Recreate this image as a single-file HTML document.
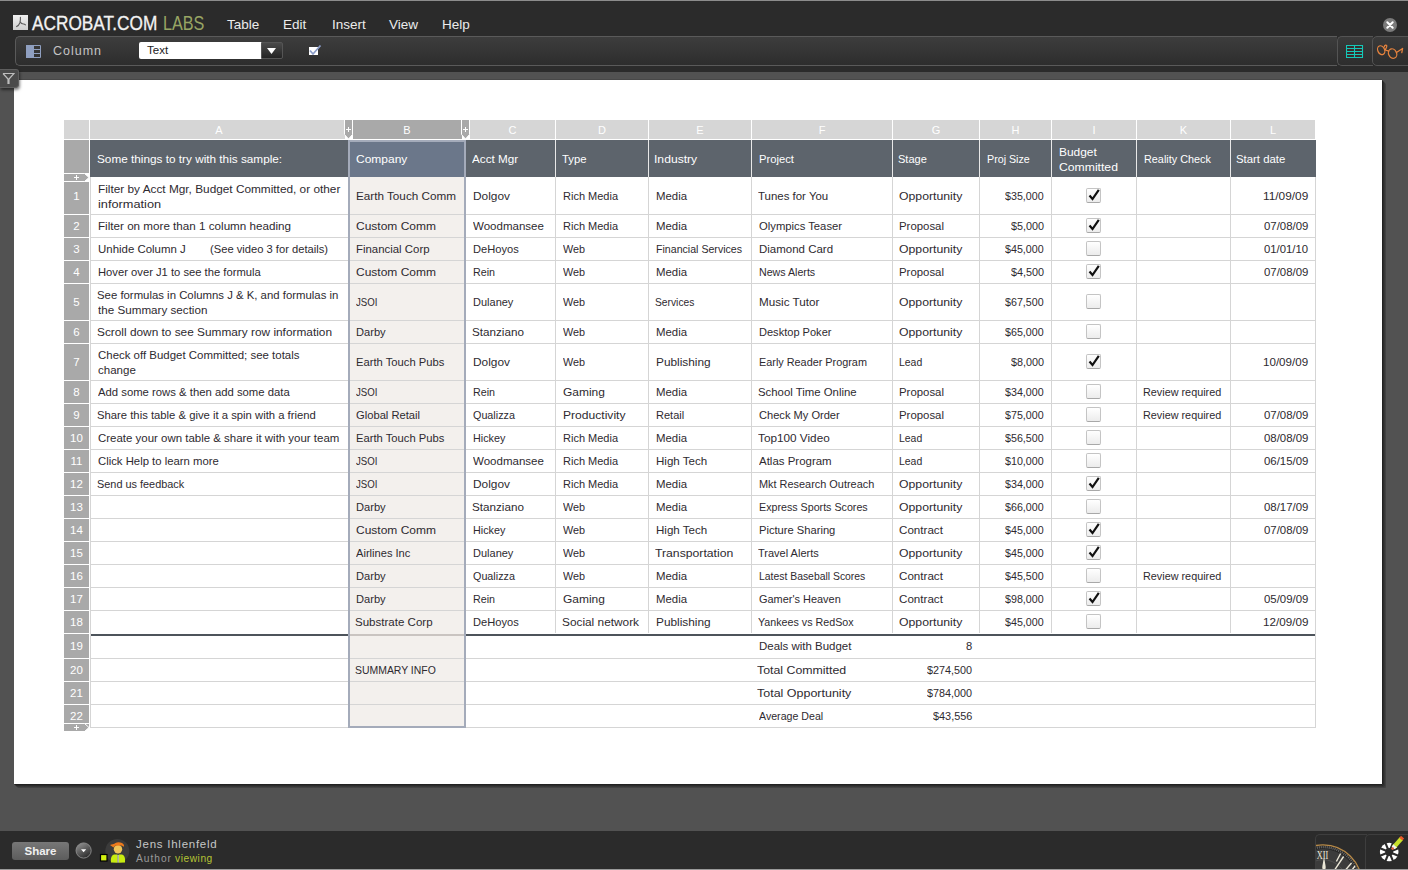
<!DOCTYPE html><html><head><meta charset="utf-8"><style>
*{margin:0;padding:0;box-sizing:border-box}
html,body{width:1408px;height:870px;overflow:hidden;background:#525252;font-family:"Liberation Sans", sans-serif}
.ab{position:absolute}
.t{position:absolute;font-size:11.8px;color:#2e2a30;white-space:nowrap;line-height:15px}
.r{text-align:right}
.cb{position:absolute;width:15px;height:15px;border:1px solid #c4c4c4;border-bottom-color:#a8a8a8;border-radius:2px;background:linear-gradient(#ffffff,#ececec)}
</style></head><body>
<div class="ab" style="left:0;top:0;width:1408px;height:72px;background:#2b2b2b"></div>
<div class="ab" style="left:0;top:0;width:1408px;height:1px;background:#8c8c8c"></div>
<div class="ab" style="left:13px;top:15px;width:15px;height:15px;background:linear-gradient(#f0f0f0,#cfcfcf)"></div>
<svg class="ab" style="left:13px;top:15px" width="15" height="15" viewBox="0 0 15 15"><path d="M7.4 2.3 C7.6 4.5 7.3 6.5 6.8 8 C6 10 4.8 11 3.6 11.6 M7.2 6.8 C8 8.5 9.5 9 10.5 9 C11.5 9 12 9.3 12.4 9.8" stroke="#5a5a5a" stroke-width="1.1" fill="none" stroke-linecap="round"/></svg>
<div class="ab" style="left:32px;top:11px;font-size:19.5px;line-height:24px;color:#f2f2f2;transform:scaleX(0.885);transform-origin:0 0;-webkit-text-stroke:0.3px #f2f2f2">ACROBAT.COM</div>
<div class="ab" style="left:163px;top:11px;font-size:19.5px;line-height:24px;color:#98a564;transform:scaleX(0.83);transform-origin:0 0">LABS</div>
<div class="ab" style="left:227px;top:17px;font-size:13.5px;line-height:16px;color:#ececec">Table</div>
<div class="ab" style="left:283px;top:17px;font-size:13.5px;line-height:16px;color:#ececec">Edit</div>
<div class="ab" style="left:332px;top:17px;font-size:13.5px;line-height:16px;color:#ececec">Insert</div>
<div class="ab" style="left:389px;top:17px;font-size:13.5px;line-height:16px;color:#ececec">View</div>
<div class="ab" style="left:442px;top:17px;font-size:13.5px;line-height:16px;color:#ececec">Help</div>
<div class="ab" style="left:1383px;top:18px;width:14px;height:14px;border-radius:7px;background:#7b7b7b"></div>
<svg class="ab" style="left:1383px;top:18px" width="14" height="14" viewBox="0 0 14 14"><path d="M4.3 4.3 L9.7 9.7 M9.7 4.3 L4.3 9.7" stroke="#fff" stroke-width="2" stroke-linecap="round"/></svg>
<div class="ab" style="left:15px;top:36px;width:1322px;height:30px;border:1px solid #5a5a5a;border-right:none;border-radius:5px 0 0 5px;background:linear-gradient(#3d3d3d,#2d2d2d)"></div>
<div class="ab" style="left:1337px;top:36px;width:36px;height:30px;border:1px solid #545454;border-right:none;border-radius:5px 0 0 5px;background:linear-gradient(#3a3a3a,#2d2d2d)"></div>
<div class="ab" style="left:1372px;top:36px;width:50px;height:30px;border:1px solid #545454;border-radius:5px 0 0 5px;background:linear-gradient(#3a3a3a,#2d2d2d)"></div>
<div class="ab" style="left:26px;top:45px;width:8px;height:13px;background:#8f9fc0"></div>
<svg class="ab" style="left:26px;top:45px" width="16" height="13" viewBox="0 0 16 13"><path d="M7.5 0.5H14.5V12.5H7.5 M7.5 4.5H14.5 M7.5 8.5H14.5" stroke="#8f9fc0" stroke-width="1" fill="none"/></svg>
<div class="ab" style="left:53px;top:44px;font-size:12.5px;line-height:15px;color:#c4c4c4;letter-spacing:1px">Column</div>
<div class="ab" style="left:139px;top:42px;width:123px;height:17px;background:#fff;border-radius:2px 0 0 2px"></div>
<div class="ab" style="left:147px;top:43px;font-size:11.5px;line-height:14px;color:#222">Text</div>
<div class="ab" style="left:261px;top:42px;width:22px;height:17px;background:linear-gradient(#4a4a4a,#242424);border:1px solid #555;border-radius:0 2px 2px 0"></div>
<svg class="ab" style="left:266px;top:47px" width="11" height="8" viewBox="0 0 11 8"><path d="M1 1H10L5.5 7Z" fill="#fff"/></svg>
<div class="ab" style="left:309px;top:47px;width:9px;height:8px;background:#fff"></div>
<svg class="ab" style="left:308px;top:43px" width="14" height="14" viewBox="0 0 14 14"><path d="M2 7.5 L5 11 L12.5 2.5" stroke="#8a9cc8" stroke-width="1.8" fill="none"/></svg>
<svg class="ab" style="left:1346px;top:45px" width="18" height="14" viewBox="0 0 18 14"><rect x="0" y="0" width="17" height="13" fill="#3a2a2a"/><path d="M0.5 0.5H16.5V12.5H0.5Z M0.5 3.5H16.5 M0.5 6.5H16.5 M0.5 9.5H16.5 M8.5 0.5V12.5" stroke="#14c8b8" stroke-width="1.1" fill="none"/></svg>
<svg class="ab" style="left:1374px;top:40px" width="34" height="22" viewBox="1374 40 34 22"><g stroke="#e8843e" stroke-width="1.25" fill="none" stroke-linecap="round" stroke-linejoin="round"><ellipse cx="1381.2" cy="50.2" rx="3.4" ry="4.6" transform="rotate(-25 1381.2 50.2)"/><ellipse cx="1392.6" cy="53.6" rx="4" ry="4.9" transform="rotate(-25 1392.6 53.6)"/><path d="M1384.2 47 C1384.6 45 1386.6 44.6 1386.8 45.8 C1387 47 1385.6 48.8 1385.2 50 L1388.8 51.2"/><path d="M1396.4 52.6 L1402.6 48.4 L1401.8 52.6"/></g></svg>
<div class="ab" style="left:14px;top:80px;width:1368px;height:704px;background:#fff"></div>
<svg class="ab" style="left:0;top:0" width="1408" height="870" viewBox="0 0 1408 870"><defs><linearGradient id="shr" x1="0" y1="0" x2="1" y2="0"><stop offset="0" stop-color="#1c1c1c"/><stop offset="1" stop-color="#474747"/></linearGradient><linearGradient id="shb" x1="0" y1="0" x2="0" y2="1"><stop offset="0" stop-color="#1c1c1c"/><stop offset="1" stop-color="#474747"/></linearGradient></defs><path d="M1382 80 L1386 84 L1386 788 L1382 784Z" fill="url(#shr)"/><path d="M14 784 L1382 784 L1386 788 L18 788Z" fill="url(#shb)"/><path d="M14 79.5H1382" stroke="#484848" stroke-width="1"/></svg>
<div class="ab" style="left:0;top:69px;width:19px;height:19px;background:#4a4a4a;border:1px solid #5e5e5e;border-left:none;border-radius:0 3px 4px 0;box-shadow:1px 2px 3px rgba(0,0,0,0.5)"></div>
<svg class="ab" style="left:2px;top:72px" width="13" height="13" viewBox="0 0 13 13"><path d="M1 1.5H12 L7 7 V12 M1 1.5 L6 7 V12" stroke="#bdbdbd" stroke-width="1.2" fill="none"/></svg>
<div class="ab" style="left:64px;top:120px;width:25px;height:19px;background:#d6d6d6"></div>
<div class="ab" style="left:90px;top:120px;width:255px;height:19px;background:#d6d6d6"></div>
<div class="ab" style="left:199.0px;top:123px;width:40px;text-align:center;font-size:11px;line-height:15px;color:#fff">A</div>
<div class="ab" style="left:353px;top:120px;width:109px;height:19px;background:#a9a9a9"></div>
<div class="ab" style="left:387.0px;top:123px;width:40px;text-align:center;font-size:11px;line-height:15px;color:#fff">B</div>
<div class="ab" style="left:470px;top:120px;width:85px;height:19px;background:#d6d6d6"></div>
<div class="ab" style="left:492.5px;top:123px;width:40px;text-align:center;font-size:11px;line-height:15px;color:#fff">C</div>
<div class="ab" style="left:556px;top:120px;width:92px;height:19px;background:#d6d6d6"></div>
<div class="ab" style="left:582.0px;top:123px;width:40px;text-align:center;font-size:11px;line-height:15px;color:#fff">D</div>
<div class="ab" style="left:649px;top:120px;width:102px;height:19px;background:#d6d6d6"></div>
<div class="ab" style="left:680.0px;top:123px;width:40px;text-align:center;font-size:11px;line-height:15px;color:#fff">E</div>
<div class="ab" style="left:752px;top:120px;width:140px;height:19px;background:#d6d6d6"></div>
<div class="ab" style="left:802.0px;top:123px;width:40px;text-align:center;font-size:11px;line-height:15px;color:#fff">F</div>
<div class="ab" style="left:893px;top:120px;width:86px;height:19px;background:#d6d6d6"></div>
<div class="ab" style="left:916.0px;top:123px;width:40px;text-align:center;font-size:11px;line-height:15px;color:#fff">G</div>
<div class="ab" style="left:980px;top:120px;width:71px;height:19px;background:#d6d6d6"></div>
<div class="ab" style="left:995.5px;top:123px;width:40px;text-align:center;font-size:11px;line-height:15px;color:#fff">H</div>
<div class="ab" style="left:1052px;top:120px;width:84px;height:19px;background:#d6d6d6"></div>
<div class="ab" style="left:1074.0px;top:123px;width:40px;text-align:center;font-size:11px;line-height:15px;color:#fff">I</div>
<div class="ab" style="left:1137px;top:120px;width:93px;height:19px;background:#d6d6d6"></div>
<div class="ab" style="left:1163.5px;top:123px;width:40px;text-align:center;font-size:11px;line-height:15px;color:#fff">K</div>
<div class="ab" style="left:1231px;top:120px;width:84px;height:19px;background:#d6d6d6"></div>
<div class="ab" style="left:1253.0px;top:123px;width:40px;text-align:center;font-size:11px;line-height:15px;color:#fff">L</div>
<svg class="ab" style="left:344px;top:120px" width="9" height="20" viewBox="0 0 9 20"><path d="M0.5 0V14.5L4.5 19L8.5 14.5V0" fill="#a9a9a9" stroke="#fff" stroke-width="1"/><path d="M4.5 7V12 M2 9.5H7" stroke="#fff" stroke-width="1"/></svg>
<svg class="ab" style="left:461px;top:120px" width="9" height="20" viewBox="0 0 9 20"><path d="M0.5 0V14.5L4.5 19L8.5 14.5V0" fill="#a9a9a9" stroke="#fff" stroke-width="1"/><path d="M4.5 7V12 M2 9.5H7" stroke="#fff" stroke-width="1"/></svg>
<div class="ab" style="left:64px;top:140px;width:25px;height:33px;background:#a9a9a9"></div>
<div class="ab" style="left:90px;top:140px;width:1226px;height:37px;background:#5d646c"></div>
<div class="ab" style="left:348px;top:140px;width:1px;height:37px;background:#e8e8e8"></div>
<div class="ab" style="left:464px;top:140px;width:1px;height:37px;background:#e8e8e8"></div>
<div class="ab" style="left:555px;top:140px;width:1px;height:37px;background:#e8e8e8"></div>
<div class="ab" style="left:648px;top:140px;width:1px;height:37px;background:#e8e8e8"></div>
<div class="ab" style="left:751px;top:140px;width:1px;height:37px;background:#e8e8e8"></div>
<div class="ab" style="left:892px;top:140px;width:1px;height:37px;background:#e8e8e8"></div>
<div class="ab" style="left:979px;top:140px;width:1px;height:37px;background:#e8e8e8"></div>
<div class="ab" style="left:1051px;top:140px;width:1px;height:37px;background:#e8e8e8"></div>
<div class="ab" style="left:1136px;top:140px;width:1px;height:37px;background:#e8e8e8"></div>
<div class="ab" style="left:1230px;top:140px;width:1px;height:37px;background:#e8e8e8"></div>
<div class="ab" style="left:64px;top:182px;width:25px;height:32px;background:#a9a9a9"></div>
<div class="ab" style="left:64px;top:187.5px;width:25px;text-align:center;font-size:11.5px;line-height:16px;color:#fff">1</div>
<div class="ab" style="left:64px;top:215px;width:25px;height:22px;background:#a9a9a9"></div>
<div class="ab" style="left:64px;top:218.0px;width:25px;text-align:center;font-size:11.5px;line-height:16px;color:#fff">2</div>
<div class="ab" style="left:64px;top:238px;width:25px;height:22px;background:#a9a9a9"></div>
<div class="ab" style="left:64px;top:241.0px;width:25px;text-align:center;font-size:11.5px;line-height:16px;color:#fff">3</div>
<div class="ab" style="left:64px;top:261px;width:25px;height:22px;background:#a9a9a9"></div>
<div class="ab" style="left:64px;top:264.0px;width:25px;text-align:center;font-size:11.5px;line-height:16px;color:#fff">4</div>
<div class="ab" style="left:64px;top:284px;width:25px;height:36px;background:#a9a9a9"></div>
<div class="ab" style="left:64px;top:294.0px;width:25px;text-align:center;font-size:11.5px;line-height:16px;color:#fff">5</div>
<div class="ab" style="left:64px;top:321px;width:25px;height:22px;background:#a9a9a9"></div>
<div class="ab" style="left:64px;top:324.0px;width:25px;text-align:center;font-size:11.5px;line-height:16px;color:#fff">6</div>
<div class="ab" style="left:64px;top:344px;width:25px;height:36px;background:#a9a9a9"></div>
<div class="ab" style="left:64px;top:354.0px;width:25px;text-align:center;font-size:11.5px;line-height:16px;color:#fff">7</div>
<div class="ab" style="left:64px;top:381px;width:25px;height:22px;background:#a9a9a9"></div>
<div class="ab" style="left:64px;top:384.0px;width:25px;text-align:center;font-size:11.5px;line-height:16px;color:#fff">8</div>
<div class="ab" style="left:64px;top:404px;width:25px;height:22px;background:#a9a9a9"></div>
<div class="ab" style="left:64px;top:407.0px;width:25px;text-align:center;font-size:11.5px;line-height:16px;color:#fff">9</div>
<div class="ab" style="left:64px;top:427px;width:25px;height:22px;background:#a9a9a9"></div>
<div class="ab" style="left:64px;top:430.0px;width:25px;text-align:center;font-size:11.5px;line-height:16px;color:#fff">10</div>
<div class="ab" style="left:64px;top:450px;width:25px;height:22px;background:#a9a9a9"></div>
<div class="ab" style="left:64px;top:453.0px;width:25px;text-align:center;font-size:11.5px;line-height:16px;color:#fff">11</div>
<div class="ab" style="left:64px;top:473px;width:25px;height:22px;background:#a9a9a9"></div>
<div class="ab" style="left:64px;top:476.0px;width:25px;text-align:center;font-size:11.5px;line-height:16px;color:#fff">12</div>
<div class="ab" style="left:64px;top:496px;width:25px;height:22px;background:#a9a9a9"></div>
<div class="ab" style="left:64px;top:499.0px;width:25px;text-align:center;font-size:11.5px;line-height:16px;color:#fff">13</div>
<div class="ab" style="left:64px;top:519px;width:25px;height:22px;background:#a9a9a9"></div>
<div class="ab" style="left:64px;top:522.0px;width:25px;text-align:center;font-size:11.5px;line-height:16px;color:#fff">14</div>
<div class="ab" style="left:64px;top:542px;width:25px;height:22px;background:#a9a9a9"></div>
<div class="ab" style="left:64px;top:545.0px;width:25px;text-align:center;font-size:11.5px;line-height:16px;color:#fff">15</div>
<div class="ab" style="left:64px;top:565px;width:25px;height:22px;background:#a9a9a9"></div>
<div class="ab" style="left:64px;top:568.0px;width:25px;text-align:center;font-size:11.5px;line-height:16px;color:#fff">16</div>
<div class="ab" style="left:64px;top:588px;width:25px;height:22px;background:#a9a9a9"></div>
<div class="ab" style="left:64px;top:591.0px;width:25px;text-align:center;font-size:11.5px;line-height:16px;color:#fff">17</div>
<div class="ab" style="left:64px;top:611px;width:25px;height:22px;background:#a9a9a9"></div>
<div class="ab" style="left:64px;top:614.0px;width:25px;text-align:center;font-size:11.5px;line-height:16px;color:#fff">18</div>
<div class="ab" style="left:64px;top:634px;width:25px;height:24px;background:#a9a9a9"></div>
<div class="ab" style="left:64px;top:638.0px;width:25px;text-align:center;font-size:11.5px;line-height:16px;color:#fff">19</div>
<div class="ab" style="left:64px;top:659px;width:25px;height:22px;background:#a9a9a9"></div>
<div class="ab" style="left:64px;top:662.0px;width:25px;text-align:center;font-size:11.5px;line-height:16px;color:#fff">20</div>
<div class="ab" style="left:64px;top:682px;width:25px;height:22px;background:#a9a9a9"></div>
<div class="ab" style="left:64px;top:685.0px;width:25px;text-align:center;font-size:11.5px;line-height:16px;color:#fff">21</div>
<div class="ab" style="left:64px;top:705px;width:25px;height:22px;background:#a9a9a9"></div>
<div class="ab" style="left:64px;top:708.0px;width:25px;text-align:center;font-size:11.5px;line-height:16px;color:#fff">22</div>
<div class="ab" style="left:64px;top:173px;width:25px;height:9px;background:#fff"></div>
<svg class="ab" style="left:64px;top:173px" width="27" height="9" viewBox="0 0 27 9"><path d="M-1 0.5H20.5L25 4.5L20.5 8.5H-1Z" fill="#a9a9a9" stroke="#fff" stroke-width="1"/><path d="M12.5 2V7 M10 4.5H15" stroke="#fff" stroke-width="1"/></svg>
<div class="ab" style="left:64px;top:723px;width:25px;height:1px;background:#fff"></div>
<svg class="ab" style="left:64px;top:723px" width="27" height="9" viewBox="0 0 27 9"><path d="M-1 0.5H20.5L25 4.5L20.5 8.5H-1Z" fill="#a9a9a9" stroke="#fff" stroke-width="1"/><path d="M12.5 2V7 M10 4.5H15" stroke="#fff" stroke-width="1"/><path d="M0 8.5H27" stroke="#fff" stroke-width="1"/></svg>
<div class="ab" style="left:350px;top:177px;width:114px;height:549px;background:#f3f0ed"></div>
<div class="ab" style="left:90px;top:214px;width:1226px;height:1px;background:#d5d5d5"></div>
<div class="ab" style="left:90px;top:237px;width:1226px;height:1px;background:#d5d5d5"></div>
<div class="ab" style="left:90px;top:260px;width:1226px;height:1px;background:#d5d5d5"></div>
<div class="ab" style="left:90px;top:283px;width:1226px;height:1px;background:#d5d5d5"></div>
<div class="ab" style="left:90px;top:320px;width:1226px;height:1px;background:#d5d5d5"></div>
<div class="ab" style="left:90px;top:343px;width:1226px;height:1px;background:#d5d5d5"></div>
<div class="ab" style="left:90px;top:380px;width:1226px;height:1px;background:#d5d5d5"></div>
<div class="ab" style="left:90px;top:403px;width:1226px;height:1px;background:#d5d5d5"></div>
<div class="ab" style="left:90px;top:426px;width:1226px;height:1px;background:#d5d5d5"></div>
<div class="ab" style="left:90px;top:449px;width:1226px;height:1px;background:#d5d5d5"></div>
<div class="ab" style="left:90px;top:472px;width:1226px;height:1px;background:#d5d5d5"></div>
<div class="ab" style="left:90px;top:495px;width:1226px;height:1px;background:#d5d5d5"></div>
<div class="ab" style="left:90px;top:518px;width:1226px;height:1px;background:#d5d5d5"></div>
<div class="ab" style="left:90px;top:541px;width:1226px;height:1px;background:#d5d5d5"></div>
<div class="ab" style="left:90px;top:564px;width:1226px;height:1px;background:#d5d5d5"></div>
<div class="ab" style="left:90px;top:587px;width:1226px;height:1px;background:#d5d5d5"></div>
<div class="ab" style="left:90px;top:610px;width:1226px;height:1px;background:#d5d5d5"></div>
<div class="ab" style="left:90px;top:634px;width:1226px;height:2px;background:#4d545b"></div>
<div class="ab" style="left:350px;top:634px;width:114px;height:2px;background:#c9c4c1"></div>
<div class="ab" style="left:90px;top:658px;width:1226px;height:1px;background:#d5d5d5"></div>
<div class="ab" style="left:90px;top:681px;width:1226px;height:1px;background:#d5d5d5"></div>
<div class="ab" style="left:90px;top:704px;width:1226px;height:1px;background:#d5d5d5"></div>
<div class="ab" style="left:90px;top:727px;width:1226px;height:1px;background:#d5d5d5"></div>
<div class="ab" style="left:555px;top:177px;width:1px;height:456px;background:#d5d5d5"></div>
<div class="ab" style="left:648px;top:177px;width:1px;height:456px;background:#d5d5d5"></div>
<div class="ab" style="left:751px;top:177px;width:1px;height:456px;background:#d5d5d5"></div>
<div class="ab" style="left:892px;top:177px;width:1px;height:456px;background:#d5d5d5"></div>
<div class="ab" style="left:979px;top:177px;width:1px;height:456px;background:#d5d5d5"></div>
<div class="ab" style="left:1051px;top:177px;width:1px;height:456px;background:#d5d5d5"></div>
<div class="ab" style="left:1136px;top:177px;width:1px;height:456px;background:#d5d5d5"></div>
<div class="ab" style="left:1230px;top:177px;width:1px;height:456px;background:#d5d5d5"></div>
<div class="ab" style="left:1315px;top:177px;width:1px;height:551px;background:#d5d5d5"></div>
<div class="ab" style="left:89px;top:120px;width:1px;height:608px;background:#fff"></div>
<div class="ab" style="left:90px;top:177px;width:1px;height:551px;background:#d5d5d5"></div>
<div class="ab" style="left:348px;top:140px;width:118px;height:588px;border:2px solid #a4abba"></div>
<div class="ab" style="left:350px;top:142px;width:114px;height:35px;background:#6b778a"></div>
<div class="t" style="left:97.00px;top:152px;color:#fff;transform:scaleX(0.9978);transform-origin:0 0;">Some things to try with this sample:</div>
<div class="t" style="left:355.90px;top:152px;color:#fff;transform:scaleX(1.0160);transform-origin:0 0;">Company</div>
<div class="t" style="left:472.40px;top:152px;color:#fff;transform:scaleX(0.9913);transform-origin:0 0;">Acct Mgr</div>
<div class="t" style="left:562.34px;top:152px;color:#fff;transform:scaleX(0.9583);transform-origin:0 0;">Type</div>
<div class="t" style="left:654.37px;top:152px;color:#fff;transform:scaleX(1.0293);transform-origin:0 0;">Industry</div>
<div class="t" style="left:758.50px;top:152px;color:#fff;transform:scaleX(0.9514);transform-origin:0 0;">Project</div>
<div class="t" style="left:898.26px;top:152px;color:#fff;transform:scaleX(0.9367);transform-origin:0 0;">Stage</div>
<div class="t" style="left:986.50px;top:152px;color:#fff;transform:scaleX(0.9064);transform-origin:0 0;">Proj Size</div>
<div class="t" style="left:1058.50px;top:145px;color:#fff;transform:scaleX(1.0108);transform-origin:0 0;">Budget</div>
<div class="t" style="left:1058.50px;top:160px;color:#fff;transform:scaleX(1.0333);transform-origin:0 0;">Committed</div>
<div class="t" style="left:1143.50px;top:152px;color:#fff;transform:scaleX(0.9192);transform-origin:0 0;">Reality Check</div>
<div class="t" style="left:1236.04px;top:152px;color:#fff;transform:scaleX(0.9640);transform-origin:0 0;">Start date</div>
<div class="t" style="left:98.00px;top:182px;transform:scaleX(1.0017);transform-origin:0 0;">Filter by Acct Mgr, Budget Committed, or other</div>
<div class="t" style="left:98.00px;top:197px;transform:scaleX(1.0810);transform-origin:0 0;">information</div>
<div class="t" style="left:355.50px;top:189px;transform:scaleX(0.9921);transform-origin:0 0;">Earth Touch Comm</div>
<div class="t" style="left:472.50px;top:189px;transform:scaleX(1.0081);transform-origin:0 0;">Dolgov</div>
<div class="t" style="left:562.60px;top:189px;transform:scaleX(0.9322);transform-origin:0 0;">Rich Media</div>
<div class="t" style="left:655.60px;top:189px;transform:scaleX(0.9656);transform-origin:0 0;">Media</div>
<div class="t" style="left:757.63px;top:189px;transform:scaleX(0.9704);transform-origin:0 0;">Tunes for You</div>
<div class="t" style="left:899.40px;top:189px;transform:scaleX(1.0377);transform-origin:0 0;">Opportunity</div>
<div class="t" style="left:1005.30px;top:189px;transform:scaleX(0.9070);transform-origin:0 0;">$35,000</div>
<div class="cb" style="left:1086px;top:188px"></div>
<svg class="ab" style="left:1087px;top:187.5px" width="14" height="14" viewBox="0 0 14 14"><path d="M2.5 7.5 L5.5 11 L11.8 1.8" stroke="#111" stroke-width="2.2" fill="none" stroke-linejoin="miter"/></svg>
<div class="t" style="left:1262.90px;top:189px;transform:scaleX(1.0045);transform-origin:0 0;">11/09/09</div>
<div class="t" style="left:98.00px;top:219px;transform:scaleX(0.9877);transform-origin:0 0;">Filter on more than 1 column heading</div>
<div class="t" style="left:355.50px;top:219px;transform:scaleX(1.0167);transform-origin:0 0;">Custom Comm</div>
<div class="t" style="left:472.50px;top:219px;transform:scaleX(0.9764);transform-origin:0 0;">Woodmansee</div>
<div class="t" style="left:562.60px;top:219px;transform:scaleX(0.9322);transform-origin:0 0;">Rich Media</div>
<div class="t" style="left:655.60px;top:219px;transform:scaleX(0.9656);transform-origin:0 0;">Media</div>
<div class="t" style="left:758.60px;top:219px;transform:scaleX(0.9547);transform-origin:0 0;">Olympics Teaser</div>
<div class="t" style="left:899.40px;top:219px;transform:scaleX(0.9660);transform-origin:0 0;">Proposal</div>
<div class="t" style="left:1011.30px;top:219px;transform:scaleX(0.9167);transform-origin:0 0;">$5,000</div>
<div class="cb" style="left:1086px;top:218px"></div>
<svg class="ab" style="left:1087px;top:217.5px" width="14" height="14" viewBox="0 0 14 14"><path d="M2.5 7.5 L5.5 11 L11.8 1.8" stroke="#111" stroke-width="2.2" fill="none" stroke-linejoin="miter"/></svg>
<div class="t" style="left:1263.60px;top:219px;transform:scaleX(0.9674);transform-origin:0 0;">07/08/09</div>
<div class="t" style="left:98.00px;top:242px;transform:scaleX(0.9700);transform-origin:0 0;">Unhide Column J</div>
<div class="t" style="left:209.70px;top:242px;transform:scaleX(0.9468);transform-origin:0 0;">(See video 3 for details)</div>
<div class="t" style="left:355.50px;top:242px;transform:scaleX(0.9671);transform-origin:0 0;">Financial Corp</div>
<div class="t" style="left:472.50px;top:242px;transform:scaleX(0.9417);transform-origin:0 0;">DeHoyos</div>
<div class="t" style="left:562.60px;top:242px;transform:scaleX(0.9167);transform-origin:0 0;">Web</div>
<div class="t" style="left:655.60px;top:242px;transform:scaleX(0.8990);transform-origin:0 0;">Financial Services</div>
<div class="t" style="left:758.60px;top:242px;transform:scaleX(0.9737);transform-origin:0 0;">Diamond Card</div>
<div class="t" style="left:899.40px;top:242px;transform:scaleX(1.0377);transform-origin:0 0;">Opportunity</div>
<div class="t" style="left:1005.30px;top:242px;transform:scaleX(0.9070);transform-origin:0 0;">$45,000</div>
<div class="cb" style="left:1086px;top:241px"></div>
<div class="t" style="left:1263.90px;top:242px;transform:scaleX(0.9609);transform-origin:0 0;">01/01/10</div>
<div class="t" style="left:98.00px;top:265px;transform:scaleX(0.9509);transform-origin:0 0;">Hover over J1 to see the formula</div>
<div class="t" style="left:355.50px;top:265px;transform:scaleX(1.0167);transform-origin:0 0;">Custom Comm</div>
<div class="t" style="left:472.50px;top:265px;transform:scaleX(0.9083);transform-origin:0 0;">Rein</div>
<div class="t" style="left:562.60px;top:265px;transform:scaleX(0.9167);transform-origin:0 0;">Web</div>
<div class="t" style="left:655.60px;top:265px;transform:scaleX(0.9656);transform-origin:0 0;">Media</div>
<div class="t" style="left:758.60px;top:265px;transform:scaleX(0.9016);transform-origin:0 0;">News Alerts</div>
<div class="t" style="left:899.40px;top:265px;transform:scaleX(0.9660);transform-origin:0 0;">Proposal</div>
<div class="t" style="left:1011.30px;top:265px;transform:scaleX(0.9167);transform-origin:0 0;">$4,500</div>
<div class="cb" style="left:1086px;top:264px"></div>
<svg class="ab" style="left:1087px;top:263.5px" width="14" height="14" viewBox="0 0 14 14"><path d="M2.5 7.5 L5.5 11 L11.8 1.8" stroke="#111" stroke-width="2.2" fill="none" stroke-linejoin="miter"/></svg>
<div class="t" style="left:1263.60px;top:265px;transform:scaleX(0.9674);transform-origin:0 0;">07/08/09</div>
<div class="t" style="left:97.04px;top:288px;transform:scaleX(0.9635);transform-origin:0 0;">See formulas in Columns J &amp; K, and formulas in</div>
<div class="t" style="left:98.00px;top:303px;transform:scaleX(0.9874);transform-origin:0 0;">the Summary section</div>
<div class="t" style="left:355.50px;top:295px;transform:scaleX(0.8192);transform-origin:0 0;">JSOI</div>
<div class="t" style="left:472.50px;top:295px;transform:scaleX(0.9326);transform-origin:0 0;">Dulaney</div>
<div class="t" style="left:562.60px;top:295px;transform:scaleX(0.9167);transform-origin:0 0;">Web</div>
<div class="t" style="left:654.73px;top:295px;transform:scaleX(0.8705);transform-origin:0 0;">Services</div>
<div class="t" style="left:758.60px;top:295px;transform:scaleX(0.9900);transform-origin:0 0;">Music Tutor</div>
<div class="t" style="left:899.40px;top:295px;transform:scaleX(1.0377);transform-origin:0 0;">Opportunity</div>
<div class="t" style="left:1005.30px;top:295px;transform:scaleX(0.9070);transform-origin:0 0;">$67,500</div>
<div class="cb" style="left:1086px;top:294px"></div>
<div class="t" style="left:97.00px;top:325px;transform:scaleX(1.0039);transform-origin:0 0;">Scroll down to see Summary row information</div>
<div class="t" style="left:355.50px;top:325px;transform:scaleX(0.9419);transform-origin:0 0;">Darby</div>
<div class="t" style="left:471.51px;top:325px;transform:scaleX(0.9902);transform-origin:0 0;">Stanziano</div>
<div class="t" style="left:562.60px;top:325px;transform:scaleX(0.9167);transform-origin:0 0;">Web</div>
<div class="t" style="left:655.60px;top:325px;transform:scaleX(0.9656);transform-origin:0 0;">Media</div>
<div class="t" style="left:758.60px;top:325px;transform:scaleX(0.9364);transform-origin:0 0;">Desktop Poker</div>
<div class="t" style="left:899.40px;top:325px;transform:scaleX(1.0377);transform-origin:0 0;">Opportunity</div>
<div class="t" style="left:1005.30px;top:325px;transform:scaleX(0.9070);transform-origin:0 0;">$65,000</div>
<div class="cb" style="left:1086px;top:324px"></div>
<div class="t" style="left:98.00px;top:348px;transform:scaleX(0.9702);transform-origin:0 0;">Check off Budget Committed; see totals</div>
<div class="t" style="left:98.00px;top:363px;transform:scaleX(0.9769);transform-origin:0 0;">change</div>
<div class="t" style="left:355.50px;top:355px;transform:scaleX(0.9516);transform-origin:0 0;">Earth Touch Pubs</div>
<div class="t" style="left:472.50px;top:355px;transform:scaleX(1.0081);transform-origin:0 0;">Dolgov</div>
<div class="t" style="left:562.60px;top:355px;transform:scaleX(0.9167);transform-origin:0 0;">Web</div>
<div class="t" style="left:655.60px;top:355px;transform:scaleX(1.0037);transform-origin:0 0;">Publishing</div>
<div class="t" style="left:758.60px;top:355px;transform:scaleX(0.9197);transform-origin:0 0;">Early Reader Program</div>
<div class="t" style="left:899.40px;top:355px;transform:scaleX(0.8846);transform-origin:0 0;">Lead</div>
<div class="t" style="left:1011.30px;top:355px;transform:scaleX(0.9167);transform-origin:0 0;">$8,000</div>
<div class="cb" style="left:1086px;top:354px"></div>
<svg class="ab" style="left:1087px;top:353.5px" width="14" height="14" viewBox="0 0 14 14"><path d="M2.5 7.5 L5.5 11 L11.8 1.8" stroke="#111" stroke-width="2.2" fill="none" stroke-linejoin="miter"/></svg>
<div class="t" style="left:1262.92px;top:355px;transform:scaleX(0.9822);transform-origin:0 0;">10/09/09</div>
<div class="t" style="left:98.00px;top:385px;transform:scaleX(0.9585);transform-origin:0 0;">Add some rows &amp; then add some data</div>
<div class="t" style="left:355.50px;top:385px;transform:scaleX(0.8192);transform-origin:0 0;">JSOI</div>
<div class="t" style="left:472.50px;top:385px;transform:scaleX(0.9083);transform-origin:0 0;">Rein</div>
<div class="t" style="left:562.60px;top:385px;transform:scaleX(1.0146);transform-origin:0 0;">Gaming</div>
<div class="t" style="left:655.60px;top:385px;transform:scaleX(0.9656);transform-origin:0 0;">Media</div>
<div class="t" style="left:757.64px;top:385px;transform:scaleX(0.9644);transform-origin:0 0;">School Time Online</div>
<div class="t" style="left:899.40px;top:385px;transform:scaleX(0.9660);transform-origin:0 0;">Proposal</div>
<div class="t" style="left:1005.30px;top:385px;transform:scaleX(0.9070);transform-origin:0 0;">$34,000</div>
<div class="cb" style="left:1086px;top:384px"></div>
<div class="t" style="left:1143.30px;top:385px;transform:scaleX(0.9176);transform-origin:0 0;">Review required</div>
<div class="t" style="left:97.04px;top:408px;transform:scaleX(0.9561);transform-origin:0 0;">Share this table &amp; give it a spin with a friend</div>
<div class="t" style="left:355.50px;top:408px;transform:scaleX(0.9485);transform-origin:0 0;">Global Retail</div>
<div class="t" style="left:472.50px;top:408px;transform:scaleX(0.9130);transform-origin:0 0;">Qualizza</div>
<div class="t" style="left:562.60px;top:408px;transform:scaleX(1.0246);transform-origin:0 0;">Productivity</div>
<div class="t" style="left:655.60px;top:408px;transform:scaleX(0.9333);transform-origin:0 0;">Retail</div>
<div class="t" style="left:758.60px;top:408px;transform:scaleX(0.9400);transform-origin:0 0;">Check My Order</div>
<div class="t" style="left:899.40px;top:408px;transform:scaleX(0.9660);transform-origin:0 0;">Proposal</div>
<div class="t" style="left:1005.30px;top:408px;transform:scaleX(0.9070);transform-origin:0 0;">$75,000</div>
<div class="cb" style="left:1086px;top:407px"></div>
<div class="t" style="left:1143.30px;top:408px;transform:scaleX(0.9176);transform-origin:0 0;">Review required</div>
<div class="t" style="left:1263.60px;top:408px;transform:scaleX(0.9674);transform-origin:0 0;">07/08/09</div>
<div class="t" style="left:98.00px;top:431px;transform:scaleX(0.9710);transform-origin:0 0;">Create your own table &amp; share it with your team</div>
<div class="t" style="left:355.50px;top:431px;transform:scaleX(0.9516);transform-origin:0 0;">Earth Touch Pubs</div>
<div class="t" style="left:472.50px;top:431px;transform:scaleX(0.9143);transform-origin:0 0;">Hickey</div>
<div class="t" style="left:562.60px;top:431px;transform:scaleX(0.9322);transform-origin:0 0;">Rich Media</div>
<div class="t" style="left:655.60px;top:431px;transform:scaleX(0.9656);transform-origin:0 0;">Media</div>
<div class="t" style="left:757.60px;top:431px;transform:scaleX(0.9972);transform-origin:0 0;">Top100 Video</div>
<div class="t" style="left:899.40px;top:431px;transform:scaleX(0.8846);transform-origin:0 0;">Lead</div>
<div class="t" style="left:1005.30px;top:431px;transform:scaleX(0.9070);transform-origin:0 0;">$56,500</div>
<div class="cb" style="left:1086px;top:430px"></div>
<div class="t" style="left:1263.60px;top:431px;transform:scaleX(0.9674);transform-origin:0 0;">08/08/09</div>
<div class="t" style="left:98.00px;top:454px;transform:scaleX(0.9595);transform-origin:0 0;">Click Help to learn more</div>
<div class="t" style="left:355.50px;top:454px;transform:scaleX(0.8192);transform-origin:0 0;">JSOI</div>
<div class="t" style="left:472.50px;top:454px;transform:scaleX(0.9764);transform-origin:0 0;">Woodmansee</div>
<div class="t" style="left:562.60px;top:454px;transform:scaleX(0.9322);transform-origin:0 0;">Rich Media</div>
<div class="t" style="left:655.60px;top:454px;transform:scaleX(0.9808);transform-origin:0 0;">High Tech</div>
<div class="t" style="left:758.60px;top:454px;transform:scaleX(0.9720);transform-origin:0 0;">Atlas Program</div>
<div class="t" style="left:899.40px;top:454px;transform:scaleX(0.8846);transform-origin:0 0;">Lead</div>
<div class="t" style="left:1005.30px;top:454px;transform:scaleX(0.9070);transform-origin:0 0;">$10,000</div>
<div class="cb" style="left:1086px;top:453px"></div>
<div class="t" style="left:1263.60px;top:454px;transform:scaleX(0.9674);transform-origin:0 0;">06/15/09</div>
<div class="t" style="left:97.08px;top:477px;transform:scaleX(0.9237);transform-origin:0 0;">Send us feedback</div>
<div class="t" style="left:355.50px;top:477px;transform:scaleX(0.8192);transform-origin:0 0;">JSOI</div>
<div class="t" style="left:472.50px;top:477px;transform:scaleX(1.0081);transform-origin:0 0;">Dolgov</div>
<div class="t" style="left:562.60px;top:477px;transform:scaleX(0.9322);transform-origin:0 0;">Rich Media</div>
<div class="t" style="left:655.60px;top:477px;transform:scaleX(0.9656);transform-origin:0 0;">Media</div>
<div class="t" style="left:758.60px;top:477px;transform:scaleX(0.9250);transform-origin:0 0;">Mkt Research Outreach</div>
<div class="t" style="left:899.40px;top:477px;transform:scaleX(1.0377);transform-origin:0 0;">Opportunity</div>
<div class="t" style="left:1005.30px;top:477px;transform:scaleX(0.9070);transform-origin:0 0;">$34,000</div>
<div class="cb" style="left:1086px;top:476px"></div>
<svg class="ab" style="left:1087px;top:475.5px" width="14" height="14" viewBox="0 0 14 14"><path d="M2.5 7.5 L5.5 11 L11.8 1.8" stroke="#111" stroke-width="2.2" fill="none" stroke-linejoin="miter"/></svg>
<div class="t" style="left:355.50px;top:500px;transform:scaleX(0.9419);transform-origin:0 0;">Darby</div>
<div class="t" style="left:471.51px;top:500px;transform:scaleX(0.9902);transform-origin:0 0;">Stanziano</div>
<div class="t" style="left:562.60px;top:500px;transform:scaleX(0.9167);transform-origin:0 0;">Web</div>
<div class="t" style="left:655.60px;top:500px;transform:scaleX(0.9656);transform-origin:0 0;">Media</div>
<div class="t" style="left:758.60px;top:500px;transform:scaleX(0.9058);transform-origin:0 0;">Express Sports Scores</div>
<div class="t" style="left:899.40px;top:500px;transform:scaleX(1.0377);transform-origin:0 0;">Opportunity</div>
<div class="t" style="left:1005.30px;top:500px;transform:scaleX(0.9070);transform-origin:0 0;">$66,000</div>
<div class="cb" style="left:1086px;top:499px"></div>
<div class="t" style="left:1263.60px;top:500px;transform:scaleX(0.9674);transform-origin:0 0;">08/17/09</div>
<div class="t" style="left:355.50px;top:523px;transform:scaleX(1.0167);transform-origin:0 0;">Custom Comm</div>
<div class="t" style="left:472.50px;top:523px;transform:scaleX(0.9143);transform-origin:0 0;">Hickey</div>
<div class="t" style="left:562.60px;top:523px;transform:scaleX(0.9167);transform-origin:0 0;">Web</div>
<div class="t" style="left:655.60px;top:523px;transform:scaleX(0.9808);transform-origin:0 0;">High Tech</div>
<div class="t" style="left:758.60px;top:523px;transform:scaleX(0.9463);transform-origin:0 0;">Picture Sharing</div>
<div class="t" style="left:899.40px;top:523px;transform:scaleX(0.9844);transform-origin:0 0;">Contract</div>
<div class="t" style="left:1005.30px;top:523px;transform:scaleX(0.9070);transform-origin:0 0;">$45,000</div>
<div class="cb" style="left:1086px;top:522px"></div>
<svg class="ab" style="left:1087px;top:521.5px" width="14" height="14" viewBox="0 0 14 14"><path d="M2.5 7.5 L5.5 11 L11.8 1.8" stroke="#111" stroke-width="2.2" fill="none" stroke-linejoin="miter"/></svg>
<div class="t" style="left:1263.60px;top:523px;transform:scaleX(0.9674);transform-origin:0 0;">07/08/09</div>
<div class="t" style="left:355.50px;top:546px;transform:scaleX(0.9421);transform-origin:0 0;">Airlines Inc</div>
<div class="t" style="left:472.50px;top:546px;transform:scaleX(0.9326);transform-origin:0 0;">Dulaney</div>
<div class="t" style="left:562.60px;top:546px;transform:scaleX(0.9167);transform-origin:0 0;">Web</div>
<div class="t" style="left:654.56px;top:546px;transform:scaleX(1.0351);transform-origin:0 0;">Transportation</div>
<div class="t" style="left:757.67px;top:546px;transform:scaleX(0.9328);transform-origin:0 0;">Travel Alerts</div>
<div class="t" style="left:899.40px;top:546px;transform:scaleX(1.0377);transform-origin:0 0;">Opportunity</div>
<div class="t" style="left:1005.30px;top:546px;transform:scaleX(0.9070);transform-origin:0 0;">$45,000</div>
<div class="cb" style="left:1086px;top:545px"></div>
<svg class="ab" style="left:1087px;top:544.5px" width="14" height="14" viewBox="0 0 14 14"><path d="M2.5 7.5 L5.5 11 L11.8 1.8" stroke="#111" stroke-width="2.2" fill="none" stroke-linejoin="miter"/></svg>
<div class="t" style="left:355.50px;top:569px;transform:scaleX(0.9419);transform-origin:0 0;">Darby</div>
<div class="t" style="left:472.50px;top:569px;transform:scaleX(0.9130);transform-origin:0 0;">Qualizza</div>
<div class="t" style="left:562.60px;top:569px;transform:scaleX(0.9167);transform-origin:0 0;">Web</div>
<div class="t" style="left:655.60px;top:569px;transform:scaleX(0.9656);transform-origin:0 0;">Media</div>
<div class="t" style="left:758.60px;top:569px;transform:scaleX(0.8810);transform-origin:0 0;">Latest Baseball Scores</div>
<div class="t" style="left:899.40px;top:569px;transform:scaleX(0.9844);transform-origin:0 0;">Contract</div>
<div class="t" style="left:1005.30px;top:569px;transform:scaleX(0.9070);transform-origin:0 0;">$45,500</div>
<div class="cb" style="left:1086px;top:568px"></div>
<div class="t" style="left:1143.30px;top:569px;transform:scaleX(0.9176);transform-origin:0 0;">Review required</div>
<div class="t" style="left:355.50px;top:592px;transform:scaleX(0.9419);transform-origin:0 0;">Darby</div>
<div class="t" style="left:472.50px;top:592px;transform:scaleX(0.9083);transform-origin:0 0;">Rein</div>
<div class="t" style="left:562.60px;top:592px;transform:scaleX(1.0146);transform-origin:0 0;">Gaming</div>
<div class="t" style="left:655.60px;top:592px;transform:scaleX(0.9656);transform-origin:0 0;">Media</div>
<div class="t" style="left:758.60px;top:592px;transform:scaleX(0.9273);transform-origin:0 0;">Gamer's Heaven</div>
<div class="t" style="left:899.40px;top:592px;transform:scaleX(0.9844);transform-origin:0 0;">Contract</div>
<div class="t" style="left:1005.30px;top:592px;transform:scaleX(0.9070);transform-origin:0 0;">$98,000</div>
<div class="cb" style="left:1086px;top:591px"></div>
<svg class="ab" style="left:1087px;top:590.5px" width="14" height="14" viewBox="0 0 14 14"><path d="M2.5 7.5 L5.5 11 L11.8 1.8" stroke="#111" stroke-width="2.2" fill="none" stroke-linejoin="miter"/></svg>
<div class="t" style="left:1263.60px;top:592px;transform:scaleX(0.9674);transform-origin:0 0;">05/09/09</div>
<div class="t" style="left:354.52px;top:615px;transform:scaleX(0.9782);transform-origin:0 0;">Substrate Corp</div>
<div class="t" style="left:472.50px;top:615px;transform:scaleX(0.9417);transform-origin:0 0;">DeHoyos</div>
<div class="t" style="left:561.60px;top:615px;transform:scaleX(1.0039);transform-origin:0 0;">Social network</div>
<div class="t" style="left:655.60px;top:615px;transform:scaleX(1.0037);transform-origin:0 0;">Publishing</div>
<div class="t" style="left:757.69px;top:615px;transform:scaleX(0.9077);transform-origin:0 0;">Yankees vs RedSox</div>
<div class="t" style="left:899.40px;top:615px;transform:scaleX(1.0377);transform-origin:0 0;">Opportunity</div>
<div class="t" style="left:1005.30px;top:615px;transform:scaleX(0.9070);transform-origin:0 0;">$45,000</div>
<div class="cb" style="left:1086px;top:614px"></div>
<div class="t" style="left:1262.61px;top:615px;transform:scaleX(0.9889);transform-origin:0 0;">12/09/09</div>
<div class="t" style="left:758.50px;top:639px;transform:scaleX(0.9716);transform-origin:0 0;">Deals with Budget</div>
<div class="t" style="left:966.40px;top:639px;transform:scaleX(0.9500);transform-origin:0 0;">8</div>
<div class="t" style="left:354.62px;top:663px;transform:scaleX(0.8844);transform-origin:0 0;">SUMMARY INFO</div>
<div class="t" style="left:757.45px;top:663px;transform:scaleX(1.0464);transform-origin:0 0;">Total Committed</div>
<div class="t" style="left:927.20px;top:663px;transform:scaleX(0.9163);transform-origin:0 0;">$274,500</div>
<div class="t" style="left:757.44px;top:686px;transform:scaleX(1.0580);transform-origin:0 0;">Total Opportunity</div>
<div class="t" style="left:927.20px;top:686px;transform:scaleX(0.9163);transform-origin:0 0;">$784,000</div>
<div class="t" style="left:758.50px;top:709px;transform:scaleX(0.9000);transform-origin:0 0;">Average Deal</div>
<div class="t" style="left:933.30px;top:709px;transform:scaleX(0.9238);transform-origin:0 0;">$43,556</div>
<div class="ab" style="left:0;top:831px;width:1408px;height:39px;background:#2b2b2b"></div>
<div class="ab" style="left:0;top:869px;width:1408px;height:1px;background:#9a9a9a"></div>
<div class="ab" style="left:12px;top:842px;width:57px;height:18px;border-radius:3px;background:linear-gradient(#777,#5c5c5c)"></div>
<div class="ab" style="left:12px;top:843px;width:57px;text-align:center;font-size:11.5px;line-height:16px;font-weight:bold;color:#f0f0f0">Share</div>
<svg class="ab" style="left:70px;top:836px" width="64" height="32" viewBox="70 836 64 32"><defs><linearGradient id="dg" x1="0" y1="0" x2="0.6" y2="1"><stop offset="0" stop-color="#9a9a9a"/><stop offset="1" stop-color="#2e2e2e"/></linearGradient></defs><circle cx="83.6" cy="850.5" r="7.6" fill="url(#dg)" stroke="#8e8e8e" stroke-width="0.9"/><path d="M81 849.3H86.2L83.6 852.2Z" fill="#fff"/><circle cx="117.3" cy="851" r="12" fill="#3b3b3b"/><path d="M111 862.5 C110.5 857 112 854.6 115 854.6 L117.5 854.6 V862.8Z M125 862.5 C125.5 857 124 854.6 121 854.6 L118.7 854.6 V862.8Z" fill="#c8ec10"/><path d="M118.1 855 V862.6" stroke="#e8e8e8" stroke-width="1"/><circle cx="118" cy="849.3" r="4.2" fill="#f0c458"/><path d="M110 845 C112 844.5 114 844 115.5 843 C117 842 120 842 122 843 C123.5 843.8 124.3 845 124 846.8 L121.5 845.5 L115 845.8 L113.5 847.5Z" fill="#ee7a1c"/><rect x="100.5" y="854.5" width="6.5" height="6.5" fill="#d2f010" stroke="#000" stroke-width="1.2"/></svg>
<div class="ab" style="left:136px;top:837px;font-size:11.5px;line-height:15px;color:#c6c6c6;letter-spacing:0.75px">Jens Ihlenfeld</div>
<div class="ab" style="left:136px;top:852px;font-size:10.2px;line-height:13px;color:#9a9a9a;letter-spacing:1px">Author</div>
<div class="ab" style="left:175px;top:852px;font-size:10.2px;line-height:13px;color:#b5c434;letter-spacing:0.55px">viewing</div>
<div class="ab" style="left:1315px;top:834px;width:52px;height:35px;border:1px solid #3e3e3e;border-bottom:none;border-right:none;border-radius:5px 0 0 0;background:#2b2b2b"></div>
<div class="ab" style="left:1365px;top:834px;width:52px;height:35px;border:1px solid #3e3e3e;border-bottom:none;border-radius:5px 0 0 0;background:#2b2b2b"></div>
<svg class="ab" style="left:1315px;top:835px" width="50" height="34" viewBox="1315 835 50 34"><defs><clipPath id="cc"><rect x="1316" y="835" width="48" height="34"/></clipPath></defs><g clip-path="url(#cc)"><circle cx="1323" cy="883.7" r="38.8" fill="#262626" stroke="#b88a48" stroke-width="1.3"/><circle cx="1323" cy="883.7" r="36.6" fill="none" stroke="#6e6e6e" stroke-width="2.4" stroke-dasharray="0.9 1.1"/><circle cx="1323" cy="883.7" r="34.6" fill="#3c3c3c"/><circle cx="1323" cy="883.7" r="24" fill="none" stroke="#575757" stroke-width="0.7"/><text x="1316.8" y="859" font-family="Liberation Serif" font-size="12" fill="#ece8d8" textLength="11.5" lengthAdjust="spacingAndGlyphs">XII</text><path d="M1340.6 853.5 L1336.4 861.5 M1343.6 856.5 L1334.6 870 M1351.5 863 L1345.5 870 M1355 866 L1352 870" stroke="#ece8d8" stroke-width="1.4"/><path d="M1323.6 859 L1324.4 859 L1325.6 866 Q1326 870 1324 870 Q1322 870 1322.4 866Z" fill="#ece8d8"/></g></svg>
<svg class="ab" style="left:1375px;top:836px" width="33" height="32" viewBox="1375 836 33 32"><circle cx="1389.2" cy="852" r="9.3" fill="#fff"/><circle cx="1389.2" cy="852" r="4" fill="#2b2b2b"/><path d="M1389.2 852 L1398.90 856.02" stroke="#2b2b2b" stroke-width="2.1"/><path d="M1389.2 852 L1393.22 861.70" stroke="#2b2b2b" stroke-width="2.1"/><path d="M1389.2 852 L1385.18 861.70" stroke="#2b2b2b" stroke-width="2.1"/><path d="M1389.2 852 L1379.50 856.02" stroke="#2b2b2b" stroke-width="2.1"/><path d="M1389.2 852 L1379.50 847.98" stroke="#2b2b2b" stroke-width="2.1"/><path d="M1389.2 852 L1385.18 842.30" stroke="#2b2b2b" stroke-width="2.1"/><path d="M1389.2 852 L1393.22 842.30" stroke="#2b2b2b" stroke-width="2.1"/><path d="M1389.2 852 L1398.90 847.98" stroke="#2b2b2b" stroke-width="2.1"/><path d="M1393.5 847.5 L1401.5 838.5" stroke="#c8e02a" stroke-width="4.2"/><path d="M1400.8 839.2 L1402.6 837.2" stroke="#e85a28" stroke-width="4.2"/><path d="M1393.2 847.8 L1395 845.8" stroke="#f4f4f4" stroke-width="4"/><circle cx="1392.6" cy="848.6" r="1.4" fill="#e06040"/></svg>
</body></html>
